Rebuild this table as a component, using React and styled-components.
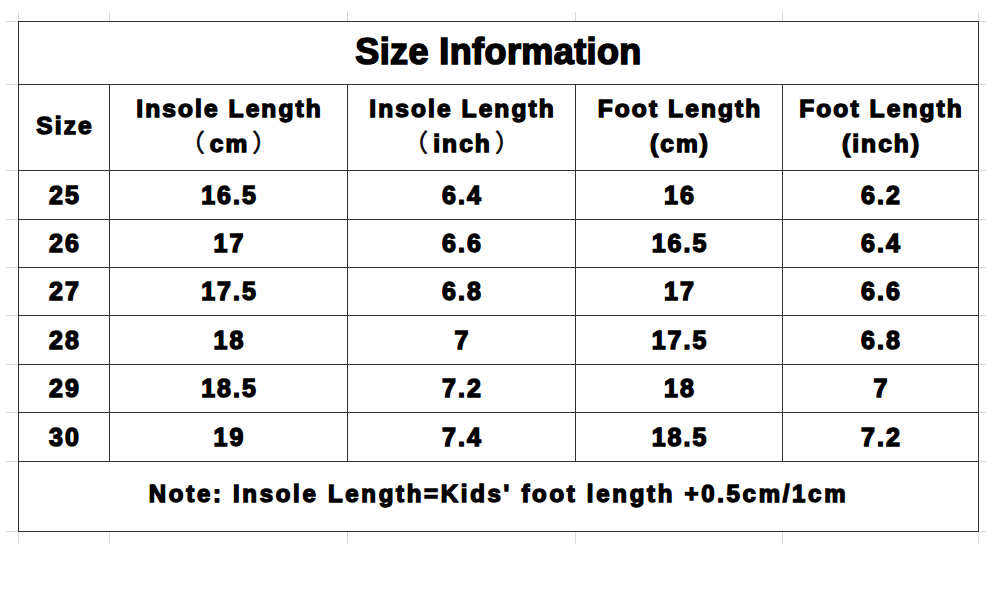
import styled, { createGlobalStyle } from "styled-components"

const GlobalStyle = createGlobalStyle`
  html, body {
    margin: 0;
    padding: 0;
    background: #ffffff;
  }
  body {
    font-family: "Liberation Sans", Arial, "Noto Sans CJK SC", sans-serif;
    color: #000;
  }
`

const columns = ["Size", "Insole Length", "Insole Length", "Foot Length", "Foot Length"]
// wide: the insole units use full-width brackets
const units = [null, { text: "cm", wide: true }, { text: "inch", wide: true }, { text: "cm" }, { text: "inch" }]

const rows = [
  ["25", "16.5", "6.4", "16", "6.2"],
  ["26", "17", "6.6", "16.5", "6.4"],
  ["27", "17.5", "6.8", "17", "6.6"],
  ["28", "18", "7", "17.5", "6.8"],
  ["29", "18.5", "7.2", "18", "7"],
  ["30", "19", "7.4", "18.5", "7.2"],
]

const rowHeights = [48, 47, 47, 48, 47, 48]

export default function App() {
  // grid rows: top margin, title, header, 6 data rows, note, bottom margin
  const totalRows = rows.length + 5

  return (
    <>
      <GlobalStyle />
      <Sheet $rowHeights={rowHeights}>
        {/* margin cells make the faint spreadsheet grid ticks */}
        {Array.from({ length: 7 }).map((_, i) => (
          <Margin key={"t" + i} style={{ gridRow: 1, gridColumn: i + 1 }} />
        ))}
        {Array.from({ length: 7 }).map((_, i) => (
          <Margin key={"b" + i} style={{ gridRow: totalRows, gridColumn: i + 1 }} />
        ))}
        {Array.from({ length: totalRows - 2 }).map((_, i) => (
          <Margin key={"l" + i} style={{ gridRow: i + 2, gridColumn: 1 }} />
        ))}
        {Array.from({ length: totalRows - 2 }).map((_, i) => (
          <Margin key={"r" + i} style={{ gridRow: i + 2, gridColumn: 7 }} />
        ))}

        <TitleCell>
          <Title>Size Information</Title>
        </TitleCell>

        {columns.map((name, i) => (
          <HeadCell key={"h" + i}>
            <HeadText>{name}</HeadText>
            {units[i] && (
              <HeadText>
                {units[i].wide ? (
                  <>
                    <Bracket>（</Bracket>
                    {units[i].text}
                    <Bracket>）</Bracket>
                  </>
                ) : (
                  "(" + units[i].text + ")"
                )}
              </HeadText>
            )}
          </HeadCell>
        ))}

        {rows.map((row, r) =>
          row.map((value, c) => (
            <Cell key={r + "-" + c}>
              <Value>{value}</Value>
            </Cell>
          ))
        )}

        <NoteCell>
          <Note>Note: Insole Length=Kids' foot length +0.5cm/1cm</Note>
        </NoteCell>
      </Sheet>
    </>
  )
}

// Styles
const Sheet = styled.div`
  display: grid;
  grid-template-columns: 12px 90px 237px 227px 206px 195px 7px;
  grid-template-rows: 9px 62px 85px ${(p) => p.$rowHeights.map((h) => h + "px").join(" ")} 69px 12px;
  gap: 1px;
  width: max-content;
  margin: 12px 0 0 6px;
  background: #d9d9d9;
`

const Margin = styled.div`
  background: #ffffff;
`

const Cell = styled.div`
  background: #ffffff;
  box-shadow: 0 0 0 1px #333333;
  display: flex;
  align-items: center;
  justify-content: center;
`

const TitleCell = styled(Cell)`
  grid-column: 2 / span 5;
`

const NoteCell = styled(Cell)`
  grid-column: 2 / span 5;
`

const HeadCell = styled(Cell)`
  flex-direction: column;
  gap: 7px;
  padding-bottom: 3px;
`

const Bold = styled.span`
  font-weight: 700;
  -webkit-text-stroke: 1.4px #000;
  line-height: 1;
  white-space: nowrap;
`

const Title = styled(Bold)`
  font-size: 36px;
  letter-spacing: 0.4px;
  -webkit-text-stroke: 1.6px #000;
  margin-top: -3px;
`

const HeadText = styled(Bold)`
  font-size: 24.5px;
  letter-spacing: 2.1px;
  margin-right: -2.1px;
  line-height: 28px;
`

const Bracket = styled.span`
  display: inline-block;
  font-weight: 400;
  -webkit-text-stroke: 0.6px #000;
  margin: 0 3px;
`

const Value = styled(Bold)`
  font-size: 25px;
  letter-spacing: 2px;
  margin-right: -2px;
`

const Note = styled(Bold)`
  font-size: 24px;
  letter-spacing: 2.7px;
  margin-top: -5px;
`
